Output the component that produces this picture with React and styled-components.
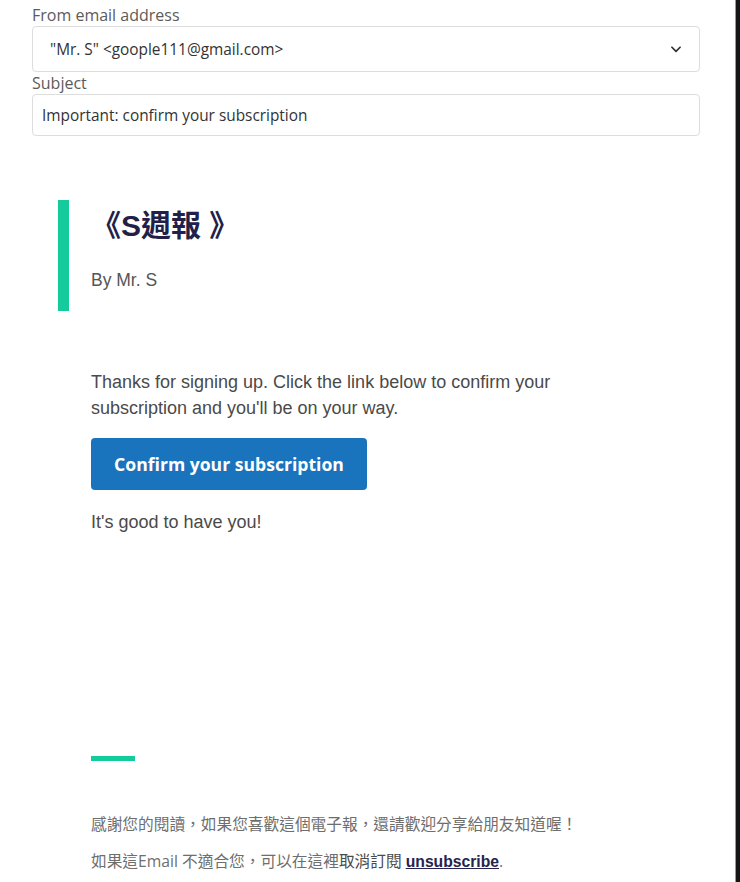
import React from "react";
import styled, { createGlobalStyle } from "styled-components";

const Global = createGlobalStyle`
  html, body { margin: 0; padding: 0; background: #ffffff; }
  body { font-family: "Open Sans", "Noto Sans CJK TC", sans-serif; }
  * { box-sizing: border-box; }
`;

const Frame = styled.div`
  display: flex;
  min-height: 882px;
  width: 740px;
`;

const Main = styled.main`
  flex: 1;
  display: flex;
  flex-direction: column;
`;

const SideEdge = styled.div`
  width: 5px;
  background: #151515;
  border-left: 1px solid #9a9a9a;
`;

const Form = styled.section`
  padding: 4px 0 0 32px;
  width: 700px;
  display: flex;
  flex-direction: column;
`;

const Label = styled.label`
  font-family: "Open Sans", sans-serif;
  font-size: 16px;
  line-height: 22px;
  color: #5b5b5b;
`;

const Field = styled.div`
  display: flex;
  align-items: center;
  justify-content: space-between;
  height: ${(p) => p.$h}px;
  padding: 0 16px 0 ${(p) => p.$pl}px;
  border: 1px solid #dddddd;
  border-radius: 4px;
  font-family: "Open Sans", sans-serif;
  font-size: 15.4px;
  color: #333333;
  background: #fff;
`;

const Chevron = styled.svg`
  width: 14px;
  height: 14px;
  color: #333;
`;

const Email = styled.article`
  padding: 64px 0 0 58px;
  display: flex;
  flex-direction: column;
`;

const Masthead = styled.header`
  border-left: 11px solid #14cc9b;
  padding: 8px 0 18px 22px;
  display: flex;
  flex-direction: column;
  gap: 23px;
`;

const Title = styled.h1`
  margin: 0;
  font-family: "Liberation Sans", "Noto Sans CJK TC", sans-serif;
  font-weight: 700;
  font-size: 30px;
  line-height: 36px;
  color: #221f48;
`;

const Byline = styled.p`
  margin: 0;
  font-family: "Liberation Sans", sans-serif;
  font-size: 17.5px;
  line-height: 26px;
  color: #555555;
`;

const Body = styled.div`
  padding: 58px 0 0 33px;
  display: flex;
  flex-direction: column;
  align-items: flex-start;
`;

const Para = styled.p`
  margin: 0;
  max-width: 480px;
  font-family: "Liberation Sans", sans-serif;
  font-size: 18px;
  line-height: 26px;
  color: #4a4a4a;
`;

const Button = styled.a`
  display: flex;
  align-items: center;
  justify-content: center;
  width: 276px;
  height: 52px;
  margin: 17px 0 19px;
  background: #1a73bd;
  border-radius: 4px;
  font-family: "Open Sans", sans-serif;
  font-weight: 700;
  font-size: 17.6px;
  color: #ffffff;
  text-decoration: none;
`;

const Footer = styled.footer`
  padding: 221px 0 0 33px;
  display: flex;
  flex-direction: column;
`;

const Rule = styled.div`
  width: 44px;
  height: 5px;
  background: #14cc9b;
  margin-bottom: 51px;
`;

const FootNote = styled.p`
  margin: 0 0 ${(p) => p.$mb || 0}px;
  font-family: "Open Sans", "Noto Sans CJK TC", sans-serif;
  font-size: 15.7px;
  line-height: 24px;
  color: #6e6e6e;
`;

const Strong = styled.span`
  color: #4a4a4a;
`;

const Unsub = styled.a`
  font-family: "Liberation Sans", sans-serif;
  font-weight: 700;
  color: #27234f;
  text-decoration: underline;
`;

export default function App() {
  return (
    <>
      <Global />
      <Frame>
        <Main>
          <Form>
            <Label>From email address</Label>
            <Field $h={46} $pl={17}>
              <span>"Mr. S" &lt;goople111@gmail.com&gt;</span>
              <Chevron viewBox="0 0 24 24" fill="none" stroke="currentColor" strokeWidth="3" strokeLinecap="round" strokeLinejoin="round">
                <path d="M5 9l7 7 7-7" />
              </Chevron>
            </Field>
            <Label>Subject</Label>
            <Field $h={42} $pl={9}>
              <span>Important: confirm your subscription</span>
            </Field>
          </Form>
          <Email>
            <Masthead>
              <Title>《S週報 》</Title>
              <Byline>By Mr. S</Byline>
            </Masthead>
            <Body>
              <Para>
                Thanks for signing up. Click the link below to confirm your subscription and you'll be on your way.
              </Para>
              <Button href="#">Confirm your subscription</Button>
              <Para>It's good to have you!</Para>
            </Body>
            <Footer>
              <Rule />
              <FootNote $mb={13}>感謝您的閱讀，如果您喜歡這個電子報，還請歡迎分享給朋友知道喔！</FootNote>
              <FootNote>
                如果這Email 不適合您，可以在這裡<Strong>取消訂閱</Strong> <Unsub href="#">unsubscribe</Unsub>.
              </FootNote>
            </Footer>
          </Email>
        </Main>
        <SideEdge />
      </Frame>
    </>
  );
}
